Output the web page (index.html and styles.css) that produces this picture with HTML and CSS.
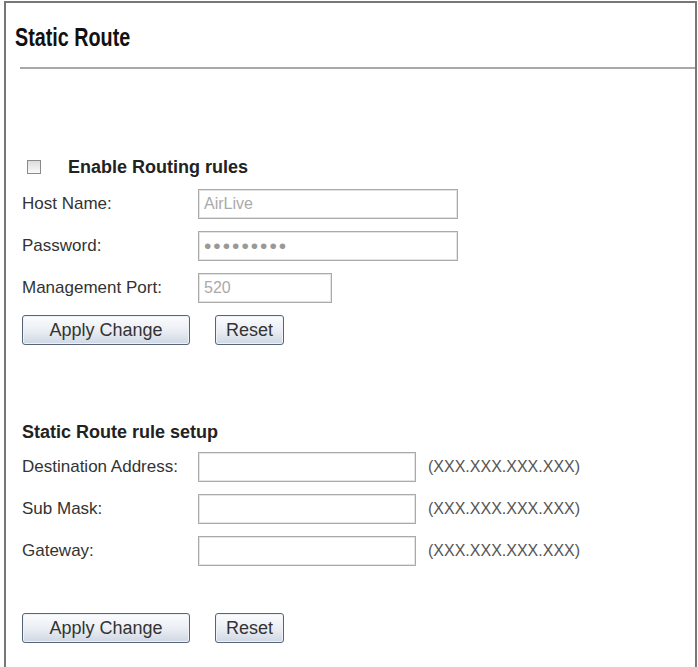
FILE: index.html
```html
<!DOCTYPE html>
<html lang="en">
<head>
  <meta charset="UTF-8">
  <title>Static Route</title>
  <link rel="stylesheet" href="styles.css">
</head>
<body>

<div class="panel">
  <h1 class="title"><span>Static Route</span></h1>
  <div class="rule"></div>

  <form class="form" onsubmit="return false">
    <label class="enable">
      <input type="checkbox" class="check"> Enable Routing rules
    </label>

    <div class="row">
      <span class="lbl">Host Name:</span>
      <input type="text" class="field" value="AirLive">
    </div>
    <div class="row">
      <span class="lbl">Password:</span>
      <input type="password" class="field pass" value="123456789">
    </div>
    <div class="row">
      <span class="lbl">Management Port:</span>
      <input type="text" class="field short" value="520">
    </div>

    <div class="actions">
      <button type="button" class="btn wide">Apply Change</button>
      <button type="reset" class="btn">Reset</button>
    </div>

    <h2 class="subhead">Static Route rule setup</h2>

    <div class="row first">
      <span class="lbl">Destination Address:</span>
      <input type="text" class="field ip">
      <span class="hint">(XXX.XXX.XXX.XXX)</span>
    </div>
    <div class="row">
      <span class="lbl">Sub Mask:</span>
      <input type="text" class="field ip">
      <span class="hint">(XXX.XXX.XXX.XXX)</span>
    </div>
    <div class="row">
      <span class="lbl">Gateway:</span>
      <input type="text" class="field ip">
      <span class="hint">(XXX.XXX.XXX.XXX)</span>
    </div>

    <div class="actions bottom">
      <button type="button" class="btn wide">Apply Change</button>
      <button type="reset" class="btn">Reset</button>
    </div>
  </form>
</div>

</body>
</html>
```

FILE: styles.css
```css
body {
  margin: 0;
  background-color: #fff;
  font-family: "Liberation Sans", Arial, sans-serif;
  color: #333;
}

.panel {
  box-sizing: border-box;
  width: 693px;
  min-height: 666px;
  margin: 1px 0 0 4px;
  border: 2px solid #777;
  border-bottom: none;
}

.title {
  margin: 19px 0 0 9px;
  font-size: 25px;
  line-height: 30px;
  font-weight: bold;
  color: #111;
}
.title span {
  display: inline-block;
  transform: scaleX(0.79);
  transform-origin: left center;
}

.rule {
  margin: 15px 0 0 14px;
  border-top: 2px solid #a8a8a8;
}

.form {
  padding-left: 16px;
  margin: 0;
}

.enable {
  display: flex;
  align-items: center;
  margin-top: 88px;
  font-weight: bold;
  font-size: 18px;
  line-height: 20px;
  color: #222;
}

.check {
  appearance: none;
  -webkit-appearance: none;
  width: 14px;
  height: 14px;
  margin: 0 27px 0 5px;
  border: 1px solid #8a8a8a;
  background: linear-gradient(#dcdcdc, #fafafa);
}

.row {
  display: flex;
  align-items: center;
  height: 30px;
  margin-top: 12px;
}
.row.first {
  margin-top: 10px;
}

.lbl {
  width: 176px;
  font-size: 17px;
  line-height: 20px;
  color: #333;
}

.field {
  box-sizing: border-box;
  width: 260px;
  height: 30px;
  padding: 0 5px;
  border: 1px solid #aaa;
  box-shadow: inset 0 0 0 1px #e4e4e4;
  font-family: "Liberation Sans", Arial, sans-serif;
  font-size: 16px;
  color: #aaa;
  outline: none;
}
.field.pass {
  font-size: 21px;
  letter-spacing: 2px;
  color: #999;
}
.field.short {
  width: 134px;
}
.field.ip {
  width: 218px;
}

.hint {
  margin-left: 12px;
  font-size: 16px;
  color: #555;
}

.actions {
  display: flex;
  gap: 25px;
  margin-top: 12px;
}
.actions.bottom {
  margin-top: 47px;
}

.btn {
  box-sizing: border-box;
  width: 69px;
  height: 30px;
  padding: 0;
  border: 1px solid #56657a;
  border-radius: 3px;
  background: linear-gradient(#fbfcfd, #e9edf3 55%, #cfd7e2);
  box-shadow: inset 0 0 0 1px #eef1f5;
  font-family: "Liberation Sans", Arial, sans-serif;
  font-size: 18px;
  color: #333;
}
.btn.wide {
  width: 168px;
}

.subhead {
  margin: 77px 0 0 0;
  font-size: 18px;
  line-height: 20px;
  font-weight: bold;
  color: #222;
}
```
